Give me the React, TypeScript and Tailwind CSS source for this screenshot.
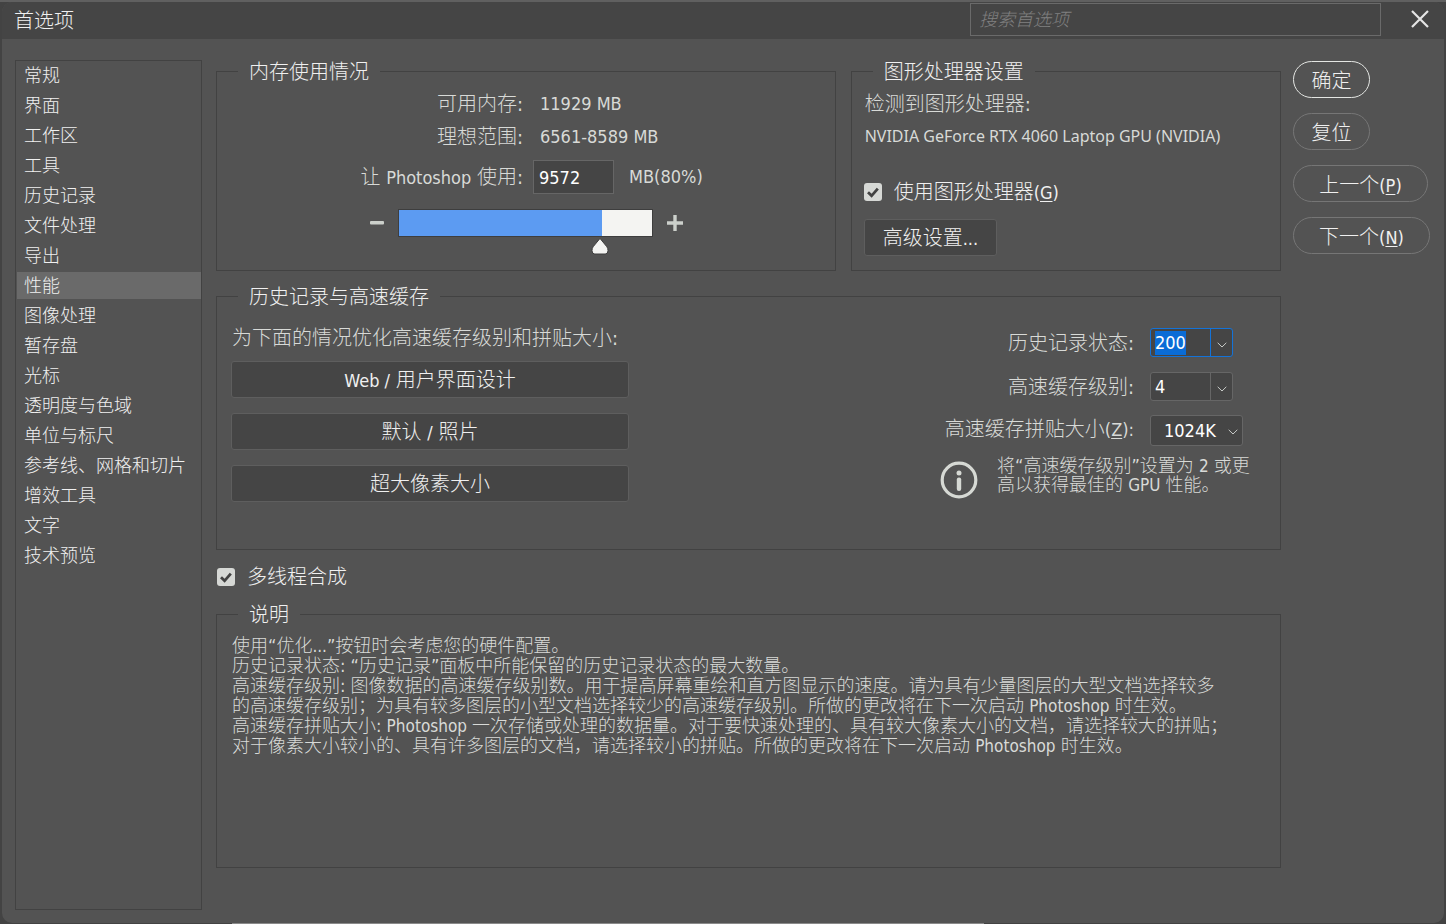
import { useEffect, useRef, useState, type ReactNode } from "react";

const SECTIONS = [
  "常规",
  "界面",
  "工作区",
  "工具",
  "历史记录",
  "文件处理",
  "导出",
  "性能",
  "图像处理",
  "暂存盘",
  "光标",
  "透明度与色域",
  "单位与标尺",
  "参考线、网格和切片",
  "增效工具",
  "文字",
  "技术预览",
];

const PRESETS = [
  { id: "web", label: <><En>Web /</En> 用户界面设计</> },
  { id: "default", label: <>默认 <En>/</En> 照片</> },
  { id: "huge", label: <>超大像素大小</> },
];

// Latin runs are set a little smaller than the Chinese around them
function En({ children }: { children: ReactNode }) {
  return <span className="text-[18px] leading-none font-normal">{children}</span>;
}

function EnSmall({ children }: { children: ReactNode }) {
  return <span className="text-[17px] leading-none font-normal">{children}</span>;
}

function Group({
  title,
  className = "",
  children,
}: {
  title: string;
  className?: string;
  children: ReactNode;
}) {
  return (
    <fieldset className={`min-w-0 border border-[#424242] ${className}`}>
      <legend className="ml-[21px] px-[11px] pt-0.5 text-xl leading-5 text-[#f0f0f0]">
        {title}
      </legend>
      {children}
    </fieldset>
  );
}

function Checkbox({ id, children }: { id: string; children: ReactNode }) {
  return (
    <div className="flex items-center gap-3">
      <span className="relative size-[18px] shrink-0">
        <input
          id={id}
          type="checkbox"
          defaultChecked
          className="peer block size-[18px] appearance-none rounded-[3px] bg-[#d6d8d5]"
        />
        <svg
          viewBox="0 0 18 18"
          className="pointer-events-none absolute inset-0 hidden size-[18px] peer-checked:block"
          fill="none"
          stroke="#424242"
          strokeWidth="2.8"
        >
          <path d="M4 9.2 7.6 12.8 13.8 5.6" />
        </svg>
      </span>
      <label htmlFor={id} className="text-xl leading-6 text-[#f0f0f0]">
        {children}
      </label>
    </div>
  );
}

function Chevron() {
  return (
    <svg viewBox="0 0 10 6" className="h-1.5 w-2.5" fill="none" stroke="#c8cbc8">
      <path d="M.7.8 5 5 9.3.8" />
    </svg>
  );
}

function Combo({
  id,
  value,
  selected = false,
}: {
  id: string;
  value: string;
  selected?: boolean;
}) {
  const ref = useRef<HTMLInputElement>(null);

  useEffect(() => {
    if (!selected) return;
    ref.current?.focus();
    ref.current?.select();
  }, [selected]);

  return (
    <div
      className={`flex h-[29px] w-[83px] rounded-[3px] border bg-[#454545] ${
        selected ? "border-[#1473d8]" : "border-[#666]"
      }`}
    >
      <input
        ref={ref}
        id={id}
        defaultValue={value}
        className="min-w-0 flex-1 bg-transparent pl-1 text-[18px] leading-6 font-normal text-white outline-none selection:bg-[#0a6cd6] selection:text-white"
      />
      <button
        type="button"
        aria-label="展开"
        className={`flex w-[22px] items-center justify-center border-l pt-1 ${
          selected ? "border-[#1473d8]" : "border-[#666]"
        }`}
      >
        <Chevron />
      </button>
    </div>
  );
}

function TitleBar() {
  return (
    <header className="flex h-[37px] shrink-0 items-start bg-[#454545] pt-px pr-3.5 pl-3">
      <h1 className="mt-1.5 text-xl leading-6 text-[#f0f0f0]">首选项</h1>
      <input
        type="search"
        aria-label="搜索首选项"
        placeholder="搜索首选项"
        className="ml-auto h-[33px] w-[411px] border border-[#6a6a6a] bg-transparent px-2 text-lg text-white placeholder:text-[#808080] placeholder:italic"
      />
      <button type="button" aria-label="关闭" className="mt-1.5 ml-[29px] p-px">
        <svg viewBox="0 0 18 18" className="size-[18px]" stroke="#e6e6e6" strokeWidth="2.2">
          <path d="M1 1 17 17M17 1 1 17" />
        </svg>
      </button>
    </header>
  );
}

function MemoryGroup() {
  const [percent, setPercent] = useState(80);

  return (
    <Group title="内存使用情况" className="h-[211px] flex-[620]">
      <div className="grid grid-cols-[306px_1fr] items-center gap-x-2.5 pt-[5px] text-xl text-[#d8dad7]">
        <span className="pt-0.5 text-right leading-[31px]">可用内存:</span>
        <span className="pl-[7px] text-[18px] leading-[33px] font-normal">11929 MB</span>
        <span className="pt-0.5 text-right leading-[31px]">理想范围:</span>
        <span className="pl-[7px] text-[18px] leading-[33px] font-normal">6561-8589 MB</span>
        <label htmlFor="memory" className="mt-[7px] text-right leading-8">
          让 <En>Photoshop</En> 使用:
        </label>
        <div className="mt-[7px] flex items-center gap-[15px]">
          <input
            id="memory"
            defaultValue="9572"
            className="h-[34px] w-[81px] border border-[#666] bg-[#454545] px-[5px] text-[18px] font-normal text-white"
          />
          <En>MB({percent}%)</En>
        </div>
      </div>
      <div className="mt-[15px] flex items-center justify-center gap-3.5 pl-0.5">
        <button type="button" aria-label="减少" onClick={() => setPercent(percent - 1)}>
          <svg viewBox="0 0 14 4" className="h-1 w-3.5">
            <rect width="14" height="3.6" rx="1" fill="#ccd0cb" />
          </svg>
        </button>
        <div className="relative h-7 w-[255px] border border-[#3e3e3e] bg-[#f4f4f2]">
          <div className="h-full bg-[#5c9bf2]" style={{ width: `${percent}%` }} />
          <input
            type="range"
            aria-label="内存用量"
            min={1}
            max={100}
            value={percent}
            onChange={(e) => setPercent(Number(e.target.value))}
            className="absolute inset-0 size-full opacity-0"
          />
          <svg
            viewBox="0 0 18 18"
            className="pointer-events-none absolute top-full mt-px size-[18px] -translate-x-1/2"
            style={{ left: `${percent - 0.5}%` }}
          >
            <path
              d="M9 1.4 15.9 9.8Q17 11.4 17 13.6Q17 17 14.2 17H3.8Q1 17 1 13.6Q1 11.4 2.1 9.8Z"
              fill="#f4f4f2"
              stroke="#3e3e3e"
            />
          </svg>
        </div>
        <button type="button" aria-label="增加" onClick={() => setPercent(percent + 1)}>
          <svg viewBox="0 0 16 16" className="size-4" stroke="#ccd0cb" strokeWidth="3.4">
            <path d="M8 0V16M0 8H16" />
          </svg>
        </button>
      </div>
    </Group>
  );
}

function GpuGroup() {
  return (
    <Group title="图形处理器设置" className="h-[211px] flex-[430]">
      <div className="flex flex-col items-start pt-[5px] pl-3 text-xl text-[#d8dad7]">
        <p className="pt-0.5 pl-px leading-[31px]">检测到图形处理器:</p>
        <p className="pl-px font-['Noto_Sans',sans-serif] text-base leading-[33px] font-normal whitespace-nowrap">
          NVIDIA GeForce RTX 4060 Laptop GPU (NVIDIA)
        </p>
        <div className="mt-[27px]">
          <Checkbox id="use-gpu">
            使用图形处理器<En>(<u className="underline-offset-2">G</u>)</En>
          </Checkbox>
        </div>
        <button
          type="button"
          className="mt-[15px] h-[37px] rounded-[3px] border border-[#5e5e5e] bg-[#454545] px-[18px] text-[#f0f0f0]"
        >
          高级设置<En>...</En>
        </button>
      </div>
    </Group>
  );
}

function HistoryGroup() {
  return (
    <Group title="历史记录与高速缓存" className="mt-3.5 h-[265px]">
      <div className="flex justify-between pr-[26px] pl-3.5 text-xl text-[#d8dad7]">
        <div className="flex w-[398px] flex-col">
          <p className="mt-[19px] mb-[11px] pl-px leading-6 whitespace-nowrap">
            为下面的情况优化高速缓存级别和拼贴大小:
          </p>
          <div className="flex flex-col gap-[15px]">
            {PRESETS.map((preset) => (
              <button
                key={preset.id}
                type="button"
                className="h-[37px] rounded-[3px] border border-[#5e5e5e] bg-[#454545] text-[#f0f0f0]"
              >
                {preset.label}
              </button>
            ))}
          </div>
        </div>

        <div className="flex w-[314px] flex-col pt-[21px]">
          <div className="grid grid-cols-[1fr_104px] items-center justify-items-start gap-x-4">
            <label htmlFor="history" className="justify-self-end leading-6">历史记录状态:</label>
            <Combo id="history" value="200" selected />
            <label htmlFor="levels" className="mt-[15px] justify-self-end leading-6">高速缓存级别:</label>
            <div className="mt-[15px]">
              <Combo id="levels" value="4" />
            </div>
            <label htmlFor="tile" className="mt-2.5 justify-self-end leading-6">
              高速缓存拼贴大小<En>(<u className="underline-offset-2">Z</u>):</En>
            </label>
            <div className="relative mt-3.5">
              <select
                id="tile"
                defaultValue="1024K"
                className="h-[31px] w-[93px] appearance-none rounded-[3px] border border-[#666] bg-[#454545] pl-[13px] text-[18px] font-normal text-white"
              >
                <option>128K</option>
                <option>1024K</option>
              </select>
              <span className="pointer-events-none absolute top-[14px] right-[5px]">
                <Chevron />
              </span>
            </div>
          </div>
          <div className="mt-2.5 flex items-start gap-[19px]">
            <svg viewBox="0 0 38 38" className="mt-[5px] size-[38px] shrink-0" fill="#d6d9d4">
              <circle cx="19" cy="19" r="16.8" fill="none" stroke="#d6d9d4" strokeWidth="3.2" />
              <circle cx="19" cy="12" r="2.5" />
              <rect x="16.8" y="16.4" width="4.4" height="13.6" rx="2" />
            </svg>
            <p className="text-lg leading-[19px] whitespace-nowrap">
              将“高速缓存级别”设置为 <EnSmall>2</EnSmall> 或更
              <br />
              高以获得最佳的 <EnSmall>GPU</EnSmall> 性能。
            </p>
          </div>
        </div>
      </div>
    </Group>
  );
}

function DescriptionGroup() {
  return (
    <Group title="说明" className="mt-3.5 flex-1">
      <div className="pt-[11px] pl-[15px] text-lg leading-5 text-[#d8dad7]">
        <p>使用“优化<EnSmall>...</EnSmall>”按钮时会考虑您的硬件配置。</p>
        <p>历史记录状态: “历史记录”面板中所能保留的历史记录状态的最大数量。</p>
        <p>
          高速缓存级别: 图像数据的高速缓存级别数。用于提高屏幕重绘和直方图显示的速度。请为具有少量图层的大型文档选择较多
          <br />
          的高速缓存级别；为具有较多图层的小型文档选择较少的高速缓存级别。所做的更改将在下一次启动 <EnSmall>Photoshop</EnSmall> 时生效。
        </p>
        <p>
          高速缓存拼贴大小: <EnSmall>Photoshop</EnSmall> 一次存储或处理的数据量。对于要快速处理的、具有较大像素大小的文档，请选择较大的拼贴；
          <br />
          对于像素大小较小的、具有许多图层的文档，请选择较小的拼贴。所做的更改将在下一次启动 <EnSmall>Photoshop</EnSmall> 时生效。
        </p>
      </div>
    </Group>
  );
}

function ActionButton({ className, children }: { className: string; children: ReactNode }) {
  return (
    <button
      type="button"
      className={`h-[37px] rounded-full border pt-0.5 text-xl text-[#f0f0f0] ${className}`}
    >
      {children}
    </button>
  );
}

export default function App() {
  const [section, setSection] = useState("性能");

  return (
    <div className="flex min-h-screen flex-col border-t-2 border-t-[#606060] bg-[#434343] px-0.5 font-['DejaVu_Sans_Condensed','Noto_Sans_CJK_SC',sans-serif] font-light">
      <div className="flex flex-1 flex-col overflow-hidden rounded-[10px] bg-[#535353]">
        <TitleBar />
        <main className="flex flex-1 pt-[21px] pb-[13px] pl-[13px]">
          <nav className="mr-3.5 flex w-[187px] shrink-0 flex-col gap-[3px] border border-[#424242] py-px pl-px">
            {SECTIONS.map((name) => (
              <button
                key={name}
                type="button"
                onClick={() => setSection(name)}
                className={`h-[27px] pl-[7px] text-left text-lg leading-[27px] text-[#f0f0f0] ${
                  name === section ? "bg-[#6a6a6a]" : ""
                }`}
              >
                {name}
              </button>
            ))}
          </nav>

          <div className="flex min-w-0 flex-1 flex-col pb-[42px]">
            <div className="flex gap-[15px]">
              <MemoryGroup />
              <GpuGroup />
            </div>
            <HistoryGroup />
            <div className="mt-[15px] pl-px">
              <Checkbox id="multithread">多线程合成</Checkbox>
            </div>
            <DescriptionGroup />
          </div>

          <div className="mr-3.5 ml-3 flex w-[137px] shrink-0 flex-col items-start gap-[15px]">
            <ActionButton className="mt-px w-[77px] border-[#e4e6e3]">确定</ActionButton>
            <ActionButton className="w-[77px] border-[#767676]">复位</ActionButton>
            <ActionButton className="w-[135px] border-[#767676]">
              上一个<En>(<u className="underline-offset-2">P</u>)</En>
            </ActionButton>
            <ActionButton className="w-full border-[#767676]">
              下一个<En>(<u className="underline-offset-2">N</u>)</En>
            </ActionButton>
          </div>
        </main>
      </div>
      <div className="mr-[460px] ml-[230px] h-px bg-[#8a8a8a]" />
    </div>
  );
}
